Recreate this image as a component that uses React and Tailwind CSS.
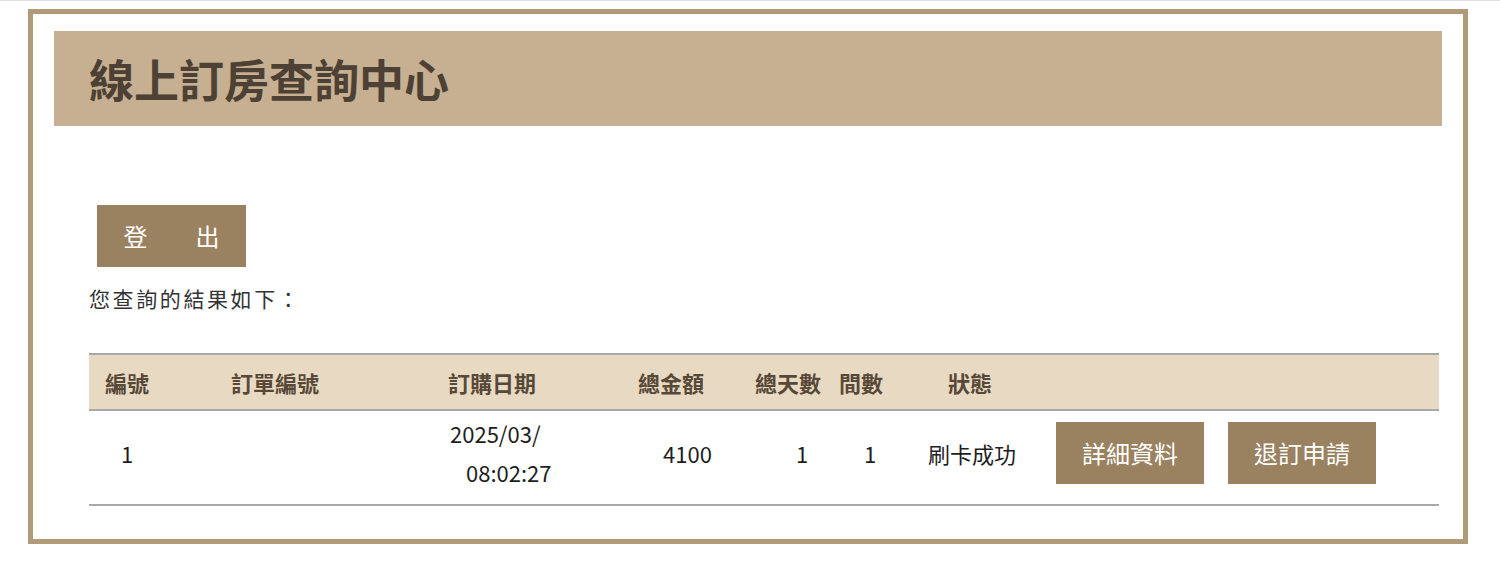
import React from "react";

const font = { fontFamily: '"Noto Sans CJK TC", "Noto Sans", sans-serif' };

const order = {
  no: 1,
  date: "2025/03/",
  time: "08:02:27",
  total: 4100,
  days: 1,
  rooms: 1,
  status: "刷卡成功",
};

export default function App() {
  return (
    <div className="min-h-[568px] w-[1500px] border-t border-[#e2e2e2] bg-white pt-[8px]" style={font}>
      <div className="ml-[28px] h-[535px] w-[1440px] border-[5px] border-[#b09a78] px-[21px] pt-[17px]">
        {/* Title bar */}
        <div className="flex h-[95px] items-center bg-[#c6b091] pl-[35px]">
          <h1 className="text-[45px] font-bold leading-none text-[#4d4034]">線上訂房查詢中心</h1>
        </div>

        <div className="ml-[35px] mr-[3px]">
          <button className="ml-[8px] mt-[79px] flex h-[62px] w-[149px] items-center justify-center bg-[#9a8160] text-[24px] leading-none text-white">
            登　　出
          </button>
          <p className="mt-[16px] text-[21px] leading-[30px] tracking-[2.6px] text-[#333]">您查詢的結果如下：</p>

          {/* Result table */}
          <div className="mt-[40px] border-t-2 border-[#a9a9a9]">
            <div className="grid h-[56px] grid-cols-[130px_210px_190px_120px_90px_90px_110px_1fr] items-center border-b-2 border-[#a9a9a9] bg-[#e8dac2] text-[22px] font-bold text-[#574838]">
              <div className="pl-[16px]">編號</div>
              <div className="pl-[12px]">訂單編號</div>
              <div className="pl-[19px]">訂購日期</div>
              <div className="pl-[19px]">總金額</div>
              <div className="pl-[16px]">總天數</div>
              <div className="pl-[10px]">間數</div>
              <div className="pl-[29px]">狀態</div>
              <div />
            </div>
            <div className="grid h-[95px] grid-cols-[130px_210px_190px_120px_90px_90px_110px_1fr] items-center border-b-2 border-[#a9a9a9] pb-[9px] text-[22px] text-[#1e1e1e]">
              <div className="pl-[32px]">{order.no}</div>
              <div />
              <div className="leading-[39px]">
                <span className="block pl-[21px]">{order.date}</span>
                <span className="block pl-[37px]">{order.time}</span>
              </div>
              <div className="pl-[44px]">{order.total}</div>
              <div className="pl-[57px]">{order.days}</div>
              <div className="pl-[35px]">{order.rooms}</div>
              <div className="pl-[9px]">{order.status}</div>
              <div className="flex gap-[24px] pl-[27px]">
                <button className="flex h-[62px] w-[148px] items-center justify-center bg-[#9a8160] text-[24px] text-white">詳細資料</button>
                <button className="flex h-[62px] w-[148px] items-center justify-center bg-[#9a8160] text-[24px] text-white">退訂申請</button>
              </div>
            </div>
          </div>
        </div>
      </div>
    </div>
  );
}
